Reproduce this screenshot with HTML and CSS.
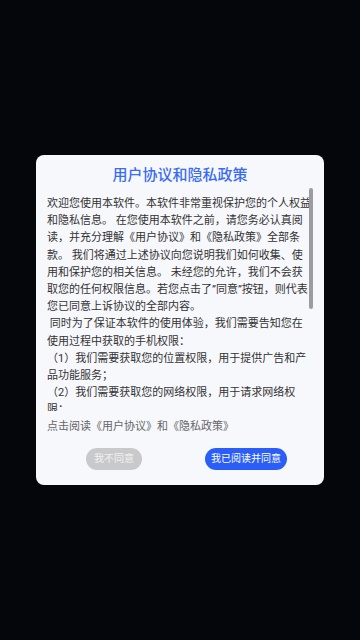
FILE: index.html
```html
<!doctype html>
<html lang="zh-CN">
<head>
	<meta charset="UTF-8">
	<title>用户协议和隐私政策</title>
	<link rel="stylesheet" href="styles.css">
</head>
<body>
	<div class="dialog">
		<div class="title">用户协议和隐私政策</div>
		<div class="scroll-wrap">
			<div class="scroll">
				<p>欢迎您使用本软件。本软件非常重视保护您的个人权益和隐私信息。 在您使用本软件之前，请您务必认真阅读，并充分理解《用户协议》和《隐私政策》全部条款。 我们将通过上述协议向您说明我们如何收集、使用和保护您的相关信息。 未经您的允许，我们不会获取您的任何权限信息。若您点击了”同意”按钮，则代表您已同意上诉协议的全部内容。</p>
				<p>&nbsp;同时为了保证本软件的使用体验，我们需要告知您在使用过程中获取的手机权限：</p>
				<p>（1）我们需要获取您的位置权限，用于提供广告和产品功能服务；</p>
				<p>（2）我们需要获取您的网络权限，用于请求网络权限；</p>
			</div>
			<div class="thumb"></div>
		</div>
		<div class="note">点击阅读《用户协议》和《隐私政策》</div>
		<div class="actions">
			<span class="btn btn-no">我不同意</span>
			<span class="btn btn-yes">我已阅读并同意</span>
		</div>
	</div>
</body>
</html>
```

FILE: styles.css
```css
html{
	height: 100%;
}
body{
	margin: 0;
	height: 100%;
	background: #05060b;
	display: flex;
	align-items: center;
	justify-content: center;
	font-family: Roboto, "Noto Sans CJK SC", sans-serif;
}
.dialog{
	width: 288px;
	height: 330px;
	box-sizing: border-box;
	padding: 10px 11px 14px;
	background: #f7f8fc;
	border-radius: 8px;
}
.title{
	font-size: 15px;
	line-height: 21px;
	font-weight: 500;
	color: #3a6cf2;
	text-align: center;
	margin-bottom: 2px;
}
.scroll-wrap{
	position: relative;
	width: 266px;
	height: 223px;
}
.scroll{
	height: 100%;
	box-sizing: border-box;
	padding: 7px 1px 0 0;
	overflow: hidden;
	font-size: 11px;
	line-height: 17.2px;
	color: #333;
}
.scroll p{
	margin: 0;
}
.thumb{
	position: absolute;
	right: 0;
	top: 0;
	width: 4px;
	height: 121px;
	border-radius: 2px;
	background: #9c9c9e;
}
.note{
	margin-top: 7px;
	font-size: 11px;
	line-height: 17px;
	color: #666;
}
.actions{
	margin-top: 13px;
	display: grid;
	grid-template-columns: 1fr 1fr;
	justify-items: center;
	margin-left: 1px;
	margin-right: 1px;
}
.btn{
	height: 22px;
	line-height: 22px;
	border-radius: 11px;
	font-size: 10px;
	text-align: center;
	color: #fff;
}
.btn-no{
	width: 56px;
	background: #c9c9cb;
	color: #f1f1f1;
}
.btn-yes{
	width: 82px;
	background: #2a5ef6;
}
```
